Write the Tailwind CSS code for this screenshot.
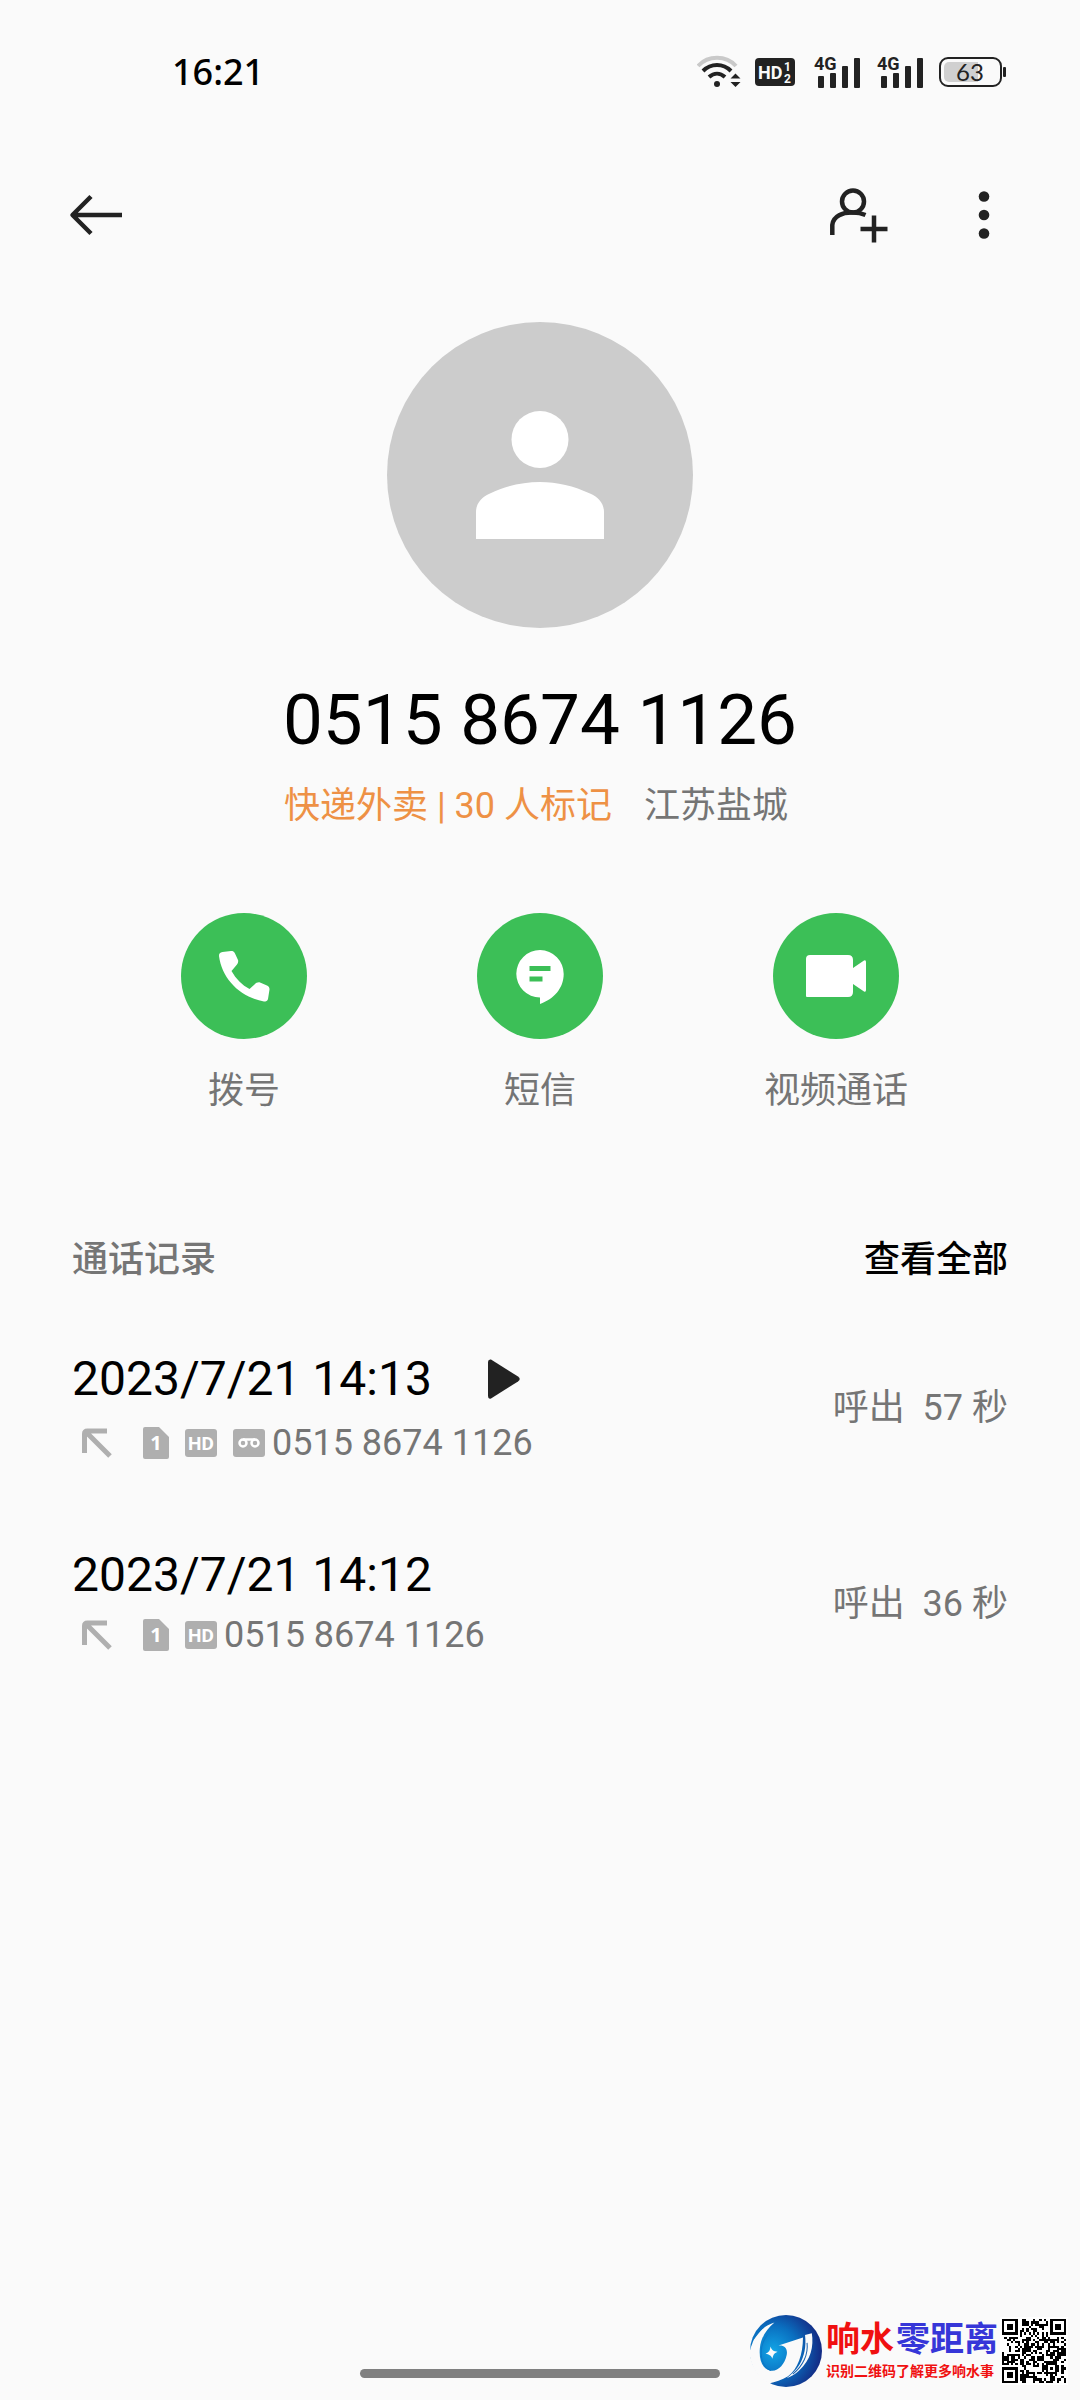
<!DOCTYPE html>
<html lang="zh-CN">
<head>
  <meta charset="UTF-8" />
  <meta name="viewport" content="width=device-width, initial-scale=1.0" />
  <title>通话详情</title>
  <script src="https://cdn.jsdelivr.net/npm/@tailwindcss/browser@4"></script>
</head>
<body class="bg-[#fafafa] text-black font-[Roboto,'Noto_Sans_CJK_SC',sans-serif]">

<div class="relative min-h-screen flex flex-col">

  <!-- 状态栏 -->
  <div class="flex items-center justify-between h-36 pl-[172px] pr-[73px]">
    <span class="text-[36px] leading-[48px] font-medium font-['Noto_Sans',sans-serif]">16:21</span>
    <div class="flex items-center text-[#222]">
      <!-- Wi-Fi -->
      <svg class="w-[44px] h-[36px]" viewBox="0 0 44 36" fill="none" stroke="currentColor" stroke-width="4">
        <path d="M1 12 C11 1 29 1 39 12" stroke="#c9c9c9" />
        <path d="M6 17 C14 9 26 9 34 17" />
        <path d="M12 23 C17 18.500 23 18.500 28 23" />
        <circle cx="20" cy="30" r="3" fill="currentColor" stroke="none" />
        <path d="M33.500 24.500h10l-5-5zM33.500 28h10l-5 5z" fill="currentColor" stroke="none" />
      </svg>
      <!-- HD 1/2 -->
      <svg class="w-[40px] h-[28px] ml-[14px]" viewBox="0 0 40 28">
        <rect width="40" height="28" rx="4" fill="currentColor" />
        <text x="3" y="21" font-size="18" font-weight="700" fill="#fafafa" font-family="Roboto">HD</text>
        <text x="29" y="13" font-size="12" font-weight="700" fill="#fafafa" font-family="Roboto">1</text>
        <text x="29" y="25" font-size="12" font-weight="700" fill="#fafafa" font-family="Roboto">2</text>
      </svg>
      <!-- 信号 -->
      <svg class="w-[47px] h-[34px] ml-[19px] overflow-visible" viewBox="0 0 47 34" fill="currentColor">
        <text x="0" y="15" font-size="18" font-weight="700" font-family="Roboto">4G</text>
        <rect x="4" y="21" width="6" height="12" rx="1" />
        <rect x="16" y="18" width="6" height="15" rx="1" />
        <rect x="28" y="11" width="6" height="22" rx="1" />
        <rect x="40" y="3" width="6" height="30" rx="1" />
      </svg>
      <svg class="w-[47px] h-[34px] ml-4 overflow-visible" viewBox="0 0 47 34" fill="currentColor">
        <text x="0" y="15" font-size="18" font-weight="700" font-family="Roboto">4G</text>
        <rect x="4" y="21" width="6" height="12" rx="1" />
        <rect x="16" y="18" width="6" height="15" rx="1" />
        <rect x="28" y="11" width="6" height="22" rx="1" />
        <rect x="40" y="3" width="6" height="30" rx="1" />
      </svg>
      <!-- 电池 -->
      <svg class="w-[68px] h-[30px] ml-[15px] overflow-visible" viewBox="0 0 68 30">
        <path d="M10 5h29v20H10a5 5 0 0 1-5-5V10a5 5 0 0 1 5-5z" fill="#d0d0d0" />
        <rect x="1" y="1" width="61" height="28" rx="8" fill="none" stroke="currentColor" stroke-width="2" />
        <rect x="64" y="10" width="3" height="10" rx="1" fill="currentColor" />
        <text x="31" y="24" font-size="24" text-anchor="middle" fill="currentColor" font-family="Lato">63</text>
      </svg>
    </div>
  </div>

  <!-- 顶部操作栏 -->
  <header class="flex items-center justify-between h-[142px] pl-[69px] pr-[85px] text-[#222]">
    <button aria-label="返回">
      <svg class="w-[54px] h-[42px]" viewBox="0 0 54 42" fill="none" stroke="currentColor" stroke-width="4.500">
        <path d="M53 21H4M22 2.500 3.500 21 22 39.500" stroke-linejoin="round" />
      </svg>
    </button>
    <div class="flex items-center gap-[84px]">
      <button aria-label="添加联系人">
        <svg class="w-[60px] h-[56px]" viewBox="0 0 60 56" fill="none" stroke="currentColor" stroke-width="4.500">
          <circle cx="24" cy="14.500" r="11" />
          <path d="M3.300 48V38C4 29 14 25 24 25.500C30 25.500 33 26.500 36.500 28" />
          <path d="M31.500 42H58.500M45 28.500V55.500" />
        </svg>
      </button>
      <button aria-label="更多">
        <svg class="w-[22px] h-[56px]" viewBox="0 0 22 56" fill="currentColor">
          <circle cx="11" cy="9.500" r="5.300" />
          <circle cx="11" cy="28" r="5.300" />
          <circle cx="11" cy="46.500" r="5.300" />
        </svg>
      </button>
    </div>
  </header>

  <!-- 联系人信息 -->
  <section class="flex flex-col items-center pt-9">
    <svg class="w-[306px] h-[306px]" viewBox="0 0 306 306">
      <circle cx="153" cy="153" r="153" fill="#ccc" />
      <circle cx="153" cy="117.500" r="28.500" fill="#fff" />
      <path d="M89 217V190C89 181 95 175 103 171.500C135 156 171 156 203 171.500C211 175 217 181 217 190V217z" fill="#fff" />
    </svg>
    <h1 class="mt-[50px] text-[71px] leading-[84px]">0515 8674 1126</h1>
    <p class="mt-5 flex gap-8 pr-2 text-[36px] leading-[48px]">
      <span class="text-[#ee9145]">快递外卖 | 30 人标记</span>
      <span class="text-[#757575]">江苏盐城</span>
    </p>
  </section>

  <!-- 操作按钮 -->
  <div class="grid grid-cols-3 px-24 pt-[83px] text-[36px] leading-[48px] text-[#757575]">
    <button class="flex flex-col items-center gap-7">
      <svg class="w-[126px] h-[126px]" viewBox="0 0 126 126">
        <circle cx="63" cy="63" r="63" fill="#3cbf57" />
        <path d="M41.500 39 50 38C52 38 53 38.500 54 40.500L57 47C57.500 48.500 57 50 56 51.500L50.500 58C55 66 61 72 68.500 76L73.500 71.500C75 70 77 69 79 69.500L86 72.500C88 73.500 88.500 74.500 88.500 76.500L87 86C86.500 88 85 88.500 83 88.500C59 84 41 66 38 43C38 40.500 39 39.300 41.500 39z" fill="#fff" />
      </svg>
      <span>拨号</span>
    </button>
    <button class="flex flex-col items-center gap-7">
      <svg class="w-[126px] h-[126px]" viewBox="0 0 126 126">
        <circle cx="63" cy="63" r="63" fill="#3cbf57" />
        <path d="M63 91V84.500A23.700 23.700 0 1 1 86.700 61C86.700 75 77 86 63 91z" fill="#fff" />
        <path d="M52.500 53h21v5h-21zM52.500 63.500h13v5h-13z" fill="#3cbf57" />
      </svg>
      <span>短信</span>
    </button>
    <button class="flex flex-col items-center gap-7">
      <svg class="w-[126px] h-[126px]" viewBox="0 0 126 126">
        <circle cx="63" cy="63" r="63" fill="#3cbf57" />
        <path d="M37 42H75Q80 42 80 47V55L91 47.500Q93 46.500 93 49V77Q93 79.500 91 78.500L80 71V79Q80 84 75 84H34Q33 84 33 83V46Q33 42 37 42z" fill="#fff" />
      </svg>
      <span>视频通话</span>
    </button>
  </div>

  <!-- 通话记录 -->
  <section class="px-[72px] pt-[121px]">
    <div class="flex items-center justify-between text-[36px] leading-[48px] font-medium">
      <h2 class="text-[#757575]">通话记录</h2>
      <button>查看全部</button>
    </div>

    <ul class="mt-[63px] flex flex-col gap-[82px]">
      <li class="flex items-center justify-between">
        <div>
          <div class="flex items-center gap-[55px] text-[48px] leading-[64px]">
            <span>2023/7/21 14:13</span>
            <button aria-label="播放录音">
              <svg class="w-[34px] h-[40px]" viewBox="0 0 34 40" fill="#222">
                <path d="M1 3Q1 0 4 .5L31 17.500Q34.500 20 31 22.500L4 39.500Q1 40.500 1 37z" />
              </svg>
            </button>
          </div>
          <div class="mt-[10px] flex items-center pl-[10px] text-[36px] leading-[44px] text-[#757575]">
            <svg class="w-[30px] h-[30px]" viewBox="0 0 30 30" fill="none" stroke="#afafaf" stroke-width="5">
              <path d="M2.500 25V6Q2.500 3 5.500 3H25M5 5 28 28" />
            </svg>
            <svg class="w-[26px] h-[32px] ml-[31px]" viewBox="0 0 26 32">
              <path d="M2 0H16L26 10V30Q26 32 24 32H2Q0 32 0 30V2Q0 0 2 0z" fill="#afafaf" />
              <text x="13" y="23" font-size="20" font-weight="700" text-anchor="middle" fill="#fff" font-family="Noto Sans">1</text>
            </svg>
            <svg class="w-[32px] h-[28px] ml-4" viewBox="0 0 32 28">
              <rect width="32" height="28" rx="3" fill="#afafaf" />
              <text x="16" y="21" font-size="19" font-weight="700" text-anchor="middle" fill="#fff" font-family="Roboto">HD</text>
            </svg>
            <svg class="w-[32px] h-[28px] ml-4" viewBox="0 0 32 28" fill="none" stroke="#fff" stroke-width="2.500">
              <rect width="32" height="28" rx="3" fill="#afafaf" stroke="none" />
              <circle cx="10" cy="14" r="3.500" />
              <circle cx="22" cy="14" r="3.500" />
              <path d="M10 10.500H22" />
            </svg>
            <span class="ml-[7px]">0515 8674 1126</span>
          </div>
        </div>
        <span class="pt-1 text-[36px] leading-[48px] text-[#757575]">呼出&nbsp; 57 秒</span>
      </li>

      <li class="flex items-center justify-between">
        <div>
          <div class="text-[48px] leading-[56px]">2023/7/21 14:12</div>
          <div class="mt-[10px] flex items-center pl-[10px] text-[36px] leading-[44px] text-[#757575]">
            <svg class="w-[30px] h-[30px]" viewBox="0 0 30 30" fill="none" stroke="#afafaf" stroke-width="5">
              <path d="M2.500 25V6Q2.500 3 5.500 3H25M5 5 28 28" />
            </svg>
            <svg class="w-[26px] h-[32px] ml-[31px]" viewBox="0 0 26 32">
              <path d="M2 0H16L26 10V30Q26 32 24 32H2Q0 32 0 30V2Q0 0 2 0z" fill="#afafaf" />
              <text x="13" y="23" font-size="20" font-weight="700" text-anchor="middle" fill="#fff" font-family="Noto Sans">1</text>
            </svg>
            <svg class="w-[32px] h-[28px] ml-4" viewBox="0 0 32 28">
              <rect width="32" height="28" rx="3" fill="#afafaf" />
              <text x="16" y="21" font-size="19" font-weight="700" text-anchor="middle" fill="#fff" font-family="Roboto">HD</text>
            </svg>
            <span class="ml-[7px]">0515 8674 1126</span>
          </div>
        </div>
        <span class="pt-1 text-[36px] leading-[48px] text-[#757575]">呼出&nbsp; 36 秒</span>
      </li>
    </ul>
  </section>

  <!-- 底部手势条 -->
  <div class="mt-auto w-1/3 h-[9px] mx-auto mb-[22px] rounded-full bg-[#808080]"></div>

  <!-- 水印 -->
  <div class="absolute right-[12px] bottom-[13px] flex items-center">
    <svg class="w-[72px] h-[72px]" viewBox="10 14 212 212">
      <defs>
        <radialGradient id="ball" cx="0.32" cy="0.5" r="0.7">
          <stop offset="0" stop-color="#12a5e6" />
          <stop offset="0.5" stop-color="#0a6fc0" />
          <stop offset="1" stop-color="#14257f" />
        </radialGradient>
      </defs>
      <circle cx="116" cy="120" r="106" fill="url(#ball)" />
      <path d="M82 36C52 46 26 66 16 100C10 112 8 126 10 136C16 172 36 200 66 216C84 210 104 206 122 194C150 174 166 130 166 80L94 104C110 102 122 112 118 132C112 160 92 182 70 178C46 172 36 146 39 112C42 80 60 54 82 36z" fill="#fafafa" />
      <path d="M172 73 192 68C198 106 190 146 154 178C146 186 134 194 118 200C132 190 146 176 156 160C170 136 176 106 172 73z" fill="#fafafa" />
      <path d="M178 96C182 130 166 164 136 188" fill="none" stroke="#1560b0" stroke-width="3" />
      <path d="M62 72C46 92 38 120 46 148C52 164 60 174 72 178" fill="none" stroke="#0a6fc0" stroke-width="2" />
      <path d="M20 88C28 66 44 50 64 40C46 54 32 72 20 88z" fill="#0a6fc0" />
      <path d="M70 107C74 118 80 122 91 122C80 127 78 132 76 143C72 132 66 130 56 128C66 124 70 118 70 107z" fill="#fafafa" />
    </svg>
    <div class="ml-[4px] w-[172px] whitespace-nowrap font-bold">
      <div class="flex justify-between text-[34px] leading-[40px]">
        <span class="text-[#f01010]">响水</span>
        <span class="text-[#3636d8]">零距离</span>
      </div>
      <div class="text-[14px] leading-[24px] text-[#f01010]">识别二维码了解更多响水事</div>
    </div>
    <svg id="qr" class="w-[68px] h-[68px] ml-[2px]" viewBox="-1 -1 31 31" shape-rendering="crispEdges">
      <rect x="-1" y="-1" width="31" height="31" fill="#fff" />
    </svg>
  </div>
</div>

<script>
  // 二维码: 29x29 模块
  const size = 29;
  const inFinder = (x, y) => (x < 8 && y < 8) || (x > 20 && y < 8) || (x < 8 && y > 20);
  const ring = (x, y, cx, cy) => Math.max(Math.abs(x - cx), Math.abs(y - cy));
  let seed = 20230721;
  let d = "";
  for (let y = 0; y < size; y++) {
    for (let x = 0; x < size; x++) {
      seed = (seed * 1103515245 + 12345) % 2147483648;
      let on = seed / 2147483648 < 0.5;
      if (inFinder(x, y)) {
        const r = Math.min(ring(x, y, 3, 3), ring(x, y, 25, 3), ring(x, y, 3, 25));
        on = r < 2 || r === 3;
      } else if (ring(x, y, 22, 22) < 3) {
        on = ring(x, y, 22, 22) !== 1;
      } else if (x === 6 || y === 6) {
        on = (x + y) % 2 === 0;
      }
      if (on) d += `M${x} ${y}h1v1h-1z`;
    }
  }
  const path = document.createElementNS("http://www.w3.org/2000/svg", "path");
  path.setAttribute("d", d);
  document.getElementById("qr").appendChild(path);
</script>

</body>
</html>
